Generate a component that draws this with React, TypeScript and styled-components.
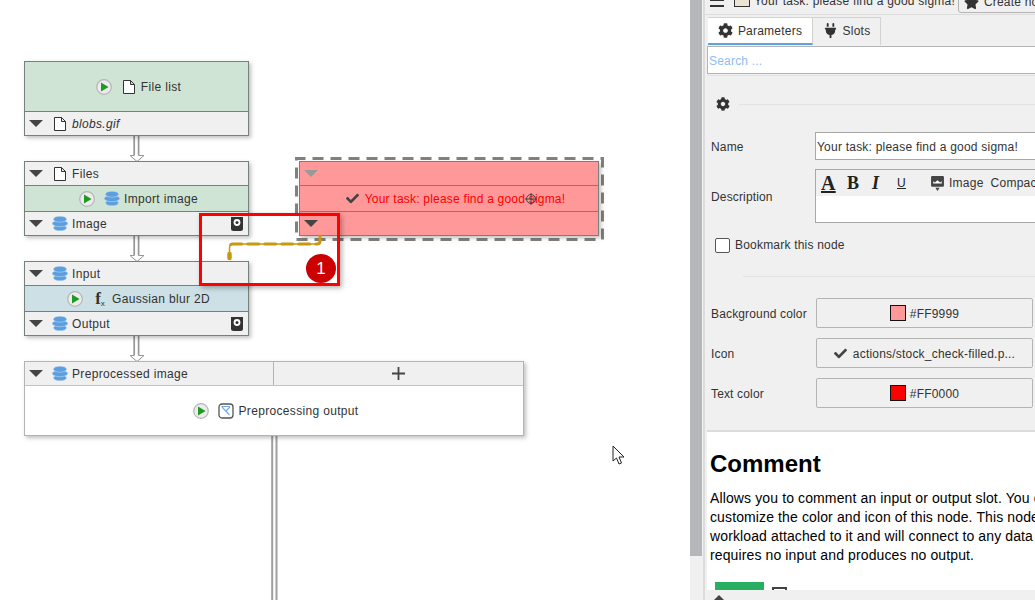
import React from 'react'
import styled, { createGlobalStyle } from 'styled-components'
import { FaCog, FaPlug, FaStar, FaCheck } from 'react-icons/fa'

const GlobalStyle = createGlobalStyle`
  html, body { margin: 0; padding: 0; background: #fff; }
  body { font-family: "Liberation Sans", Arial, sans-serif; font-size: 12px; color: #333; }
  * { box-sizing: border-box; }
`

const Page = styled.div`
  width: 1035px;
  height: 600px;
  display: flex;
  overflow: hidden;
`
const Canvas = styled.div`
  position: relative;
  width: 690px;
  height: 600px;
  flex: none;
  background: #fff;
`
const Divider = styled.div`
  width: 15px;
  flex: none;
  background: #f0f0f0;
  display: flex;
  border-right: 2px solid #dcdcdc;
`
const Thumb = styled.div`
  width: 12px;
  height: 556px;
  background: #b6b7bb;
`

/* graph nodes */
const Node = styled.div<{ $x: number; $y: number; $w: number; $light?: boolean; $bg?: string }>`
  position: absolute;
  left: ${p => p.$x}px;
  top: ${p => p.$y}px;
  width: ${p => p.$w}px;
  display: flex;
  flex-direction: column;
  border: 1px solid ${p => (p.$light ? '#b4b4b4' : '#77817c')};
  background: ${p => p.$bg || '#f0f0f0'};
  box-shadow: 2px 2px 4px rgba(0, 0, 0, 0.25);
`
const Slot = styled.div`
  height: 23px;
  display: flex;
  align-items: center;
  gap: 4px;
  padding: 0 5px 0 4px;
`
const SlotSplit = styled.div`
  display: flex;
  height: 23px;
  background: #f0f0f0;
`
const SlotName = styled(Slot)`
  width: 248px;
  flex: none;
`
const SlotAdd = styled.div`
  flex: 1;
  display: flex;
  align-items: center;
  justify-content: center;
  border-left: 1px solid #b4b4b4;
`
const Title = styled.div<{
  $h: number
  $bg?: string
  $lineTop?: boolean
  $lineBottom?: boolean
  $color?: string
  $shift?: number
}>`
  height: ${p => p.$h}px;
  display: flex;
  align-items: center;
  justify-content: center;
  gap: 4px;
  padding-left: ${p => p.$shift ?? 4}px;
  background: ${p => p.$bg || 'transparent'};
  border-top: ${p => (p.$lineTop ? `1px solid ${p.$color || '#77817c'}` : 'none')};
  border-bottom: ${p => (p.$lineBottom ? `1px solid ${p.$color || '#77817c'}` : 'none')};
`
const NodeText = styled.span<{ $italic?: boolean; $color?: string; $track?: number }>`
  font-style: ${p => (p.$italic ? 'italic' : 'normal')};
  color: ${p => p.$color || '#333'};
  white-space: nowrap;
  letter-spacing: ${p => p.$track ?? 0.33}px;
`
const Caret = styled.span<{ $faded?: boolean }>`
  width: 0;
  height: 0;
  margin-right: 5px;
  flex: none;
  border-left: 7px solid transparent;
  border-right: 7px solid transparent;
  border-top: 7px solid ${p => (p.$faded ? '#999' : '#444')};
`
const Push = styled.div`
  flex: 1;
`
const IconSlot = styled.span`
  width: 16px;
  height: 16px;
  flex: none;
  display: flex;
  align-items: center;
  justify-content: center;
`
const Drawing = styled.svg<{ $after?: number }>`
  flex: none;
  display: block;
  margin-right: ${p => p.$after ?? 0}px;
`
const Overlay = styled.svg`
  position: absolute;
  left: 0;
  top: 0;
  pointer-events: none;
`
const DashFrame = styled.div`
  position: absolute;
  left: 295px;
  top: 157px;
  width: 309px;
  height: 84px;
`
const Highlight = styled.div`
  position: absolute;
  left: 199px;
  top: 213px;
  width: 141px;
  height: 73px;
  border: 3px solid #f00;
  box-shadow: 2px 2px 5px rgba(0, 0, 0, 0.3);
`
const Badge = styled.div`
  position: absolute;
  left: 306px;
  top: 254px;
  width: 30px;
  height: 29px;
  border-radius: 50%;
  background: #c00;
  color: #fff;
  font-size: 17px;
  display: flex;
  align-items: center;
  justify-content: center;
`

const Play = () => (
  <Drawing $after={5} width="16" height="16" viewBox="0 0 16 16">
    <circle cx="8" cy="8" r="7.3" fill="#ececec" stroke="#b5b5b5" strokeWidth="1.2" />
    <path d="M5 3.5 L12.6 8 L5 12.5 Z" fill="#1e9a23" />
  </Drawing>
)
const FileIcon = () => (
  <IconSlot>
    <Drawing width="12" height="14" viewBox="0 0 12 14">
      <path d="M0.5 0.5 H7.5 L11.5 4.5 V13.5 H0.5 Z M7.5 0.5 V4.5 H11.5" fill="#fff" stroke="#333" strokeWidth="1" />
    </Drawing>
  </IconSlot>
)
const Layers = () => (
  <IconSlot>
    <Drawing width="16" height="15" viewBox="0 0 16 15">
      <g fill="#5b9fe0" stroke="#cfe0f3" strokeWidth="0.5">
        <ellipse cx="8" cy="11.8" rx="6.6" ry="3" />
        <ellipse cx="8" cy="7.5" rx="7.8" ry="3.2" />
        <ellipse cx="8" cy="3.2" rx="6.6" ry="3" />
      </g>
    </Drawing>
  </IconSlot>
)
const Capture = () => (
  <Drawing width="12" height="14" viewBox="0 0 12 14">
    <path d="M0 0 H12 V11.5 Q12 14 9.5 14 H2.5 Q0 14 0 11.5 Z" fill="#333" />
    <circle cx="6" cy="5.5" r="3.4" fill="#fff" />
    <circle cx="6" cy="5.5" r="1.5" fill="#333" />
  </Drawing>
)
const PreviewIcon = () => (
  <IconSlot>
    <Drawing width="16" height="16" viewBox="0 0 16 16">
      <rect x="1" y="1" width="14" height="14" rx="3" fill="#fff" stroke="#555" strokeWidth="1.3" />
      <path d="M3.5 3.5 H12 M4 4 L11.5 12 M8 8 L12 4" fill="none" stroke="#6fa8e8" strokeWidth="1.1" />
    </Drawing>
  </IconSlot>
)
const Fx = styled.span`
  width: 16px;
  flex: none;
  text-align: center;
  font-family: "Liberation Serif", serif;
  font-weight: bold;
  font-size: 17px;
  line-height: 16px;
  color: #333;
  sub {
    font-size: 8px;
    font-family: "Liberation Sans", sans-serif;
    font-weight: normal;
    vertical-align: -2px;
    line-height: 0;
  }
`

const Edge = ({ y }: { y: number }) => (
  <Overlay width="690" height="600">
    <path d={`M134.2 ${y} V${y + 20} M138.6 ${y} V${y + 20}`} fill="none" stroke="#979797" strokeWidth="1.7" />
    <path d={`M134.2 ${y + 19.5} H130 L137 ${y + 25.5} L144 ${y + 19.5} H138.6`} fill="#fff" stroke="#979797" strokeWidth="1" />
  </Overlay>
)

/* side panel */
const Panel = styled.div`
  flex: 1;
  min-width: 0;
  height: 600px;
  position: relative;
  background: #f0f0f0;
  display: flex;
  flex-direction: column;
  overflow: hidden;
`
const TopBar = styled.div`
  height: 15px;
  flex: none;
  display: flex;
  align-items: flex-end;
  padding: 0 0 7px 5px;
  border-bottom: 1px solid #dcdcdc;
  overflow: hidden;
  white-space: nowrap;
`
const Burger = styled.div`
  width: 14px;
  height: 8px;
  margin-right: 10px;
  flex: none;
  border-top: 2px solid #333;
  border-bottom: 2px solid #333;
`
const TopSwatch = styled.div`
  width: 16px;
  height: 14px;
  margin-right: 4px;
  flex: none;
  background: #ebe3d3;
  border: 1px solid #333;
`
const TopTitle = styled.span`
  letter-spacing: 0.22px;
  margin-bottom: -1px;
`
const CreateButton = styled.div`
  display: flex;
  align-items: center;
  gap: 5px;
  height: 22px;
  margin-left: 3px;
  margin-bottom: -6px;
  padding: 0 8px 0 5px;
  border: 1px solid #b4b4b4;
  border-radius: 3px;
  background: #f0f0f0;
  color: #333;
  letter-spacing: 0.2px;
  svg { color: #333; font-size: 15px; }
`
const Tabs = styled.div`
  height: 28px;
  margin: 2px 0 0 3px;
  display: flex;
  flex: none;
`
const Tab = styled.div<{ $active?: boolean }>`
  display: flex;
  align-items: center;
  justify-content: center;
  gap: 5px;
  width: ${p => (p.$active ? '105px' : '68px')};
  background: ${p => (p.$active ? '#fff' : '#f0f0f0')};
  border: 1px solid #d2d2d2;
  border-left: ${p => (p.$active ? 'none' : '0')};
  border-bottom: ${p => (p.$active ? '2px solid #5ea2e4' : 'none')};
  padding-bottom: ${p => (p.$active ? '0' : '2px')};
  letter-spacing: 0.22px;
  svg { font-size: 15px; color: #333; }
`
const SearchInput = styled.div`
  height: 28px;
  margin: 1px 0 0 2px;
  flex: none;
  padding: 1px 0 0 1px;
  display: flex;
  align-items: center;
  background: #fff;
  border: 1px solid #b4b4b4;
  border-right: none;
  color: #8ebcf5;
  letter-spacing: 0.2px;
`
const FormLine = styled.div`
  height: 1px;
  margin: 1px 0 0 2px;
  flex: none;
  background: #e2e2e2;
`
const GroupHead = styled.div`
  display: flex;
  align-items: center;
  gap: 9px;
  margin: 18px 0 0 11px;
  height: 20px;
  flex: none;
  svg { font-size: 14px; color: #333; flex: none; }
`
const Rule = styled.div`
  flex: 1;
  height: 1px;
  background: #e2e2e2;
`
const Row = styled.div<{ $top: number; $h: number }>`
  display: flex;
  align-items: center;
  margin-top: ${p => p.$top}px;
  height: ${p => p.$h}px;
  flex: none;
  padding-left: 6px;
`
const Label = styled.div`
  width: 104px;
  flex: none;
  padding-top: 2px;
  color: #333;
  letter-spacing: 0.15px;
`
const TextBox = styled.div`
  flex: 1;
  height: 28px;
  display: flex;
  align-items: center;
  padding: 2px 0 0 1px;
  background: #fff;
  border: 1px solid #a8a8a8;
  border-right: none;
  white-space: nowrap;
  letter-spacing: 0.22px;
`
const Editor = styled.div`
  flex: 1;
  height: 54px;
  background: #fff;
  border: 1px solid #a8a8a8;
  border-right: none;
  display: flex;
  flex-direction: column;
  overflow: hidden;
`
const EditorBar = styled.div`
  height: 26px;
  flex: none;
  padding-left: 5px;
  background: #f0f0f0;
  display: flex;
  align-items: center;
  white-space: nowrap;
  letter-spacing: 0.25px;
`
const Glyph = styled.span<{ $w: number; $italic?: boolean; $under?: boolean; $size?: number }>`
  width: ${p => p.$w}px;
  flex: none;
  font-family: "Liberation Serif", serif;
  font-weight: bold;
  font-size: ${p => p.$size || 17}px;
  font-style: ${p => (p.$italic ? 'italic' : 'normal')};
  text-decoration: ${p => (p.$under ? 'underline' : 'none')};
  color: #222;
`
const PlainGlyph = styled(Glyph)`
  font-family: "Liberation Sans", sans-serif;
  font-weight: normal;
  font-size: 12px;
`
const EditorText = styled.span`
  margin-left: 5px;
  margin-right: 7px;
`
const CheckRow = styled.div`
  display: flex;
  align-items: center;
  gap: 5px;
  height: 16px;
  margin: 14px 0 0 10px;
  flex: none;
`
const Box = styled.div`
  width: 15px;
  height: 15px;
  background: #fff;
  border: 1px solid #555;
  border-radius: 2px;
`
const Separator = styled.div`
  height: 1px;
  margin: 23px 0 0 38px;
  flex: none;
  background: #e2e2e2;
`
const ValueButton = styled.div`
  width: 217px;
  height: 30px;
  margin-left: 1px;
  flex: none;
  display: flex;
  align-items: center;
  justify-content: center;
  gap: 4px;
  border: 1px solid #b4b4b4;
  border-radius: 2px;
  background: #f0f0f0;
  letter-spacing: 0.2px;
  svg { font-size: 13px; color: #444; margin-right: 2px; }
`
const ValueText = styled.span`
  padding-top: 2px;
`
const Swatch = styled.div<{ $c: string }>`
  width: 16px;
  height: 16px;
  background: ${p => p.$c};
  border: 1px solid #111;
`
const Doc = styled.div`
  margin: 22px 0 0 2px;
  flex: 1;
  min-height: 0;
  padding: 18px 0 0 3px;
  background: #fff;
  border-top: 2px solid #dcdcdc;
  white-space: nowrap;
  overflow: hidden;
  color: #000;
`
const DocTitle = styled.h1`
  margin: 0;
  font-size: 24px;
  line-height: 28px;
  font-weight: bold;
  color: #000;
`
const DocText = styled.p`
  margin: 11px 0 0;
  font-size: 14px;
  line-height: 19px;
  letter-spacing: 0.12px;
`
const DocBlock = styled.div`
  display: flex;
  align-items: flex-start;
  gap: 8px;
  margin: 17px 0 0 5px;
`
const GreenBlock = styled.div`
  width: 49px;
  height: 30px;
  background: #27ae60;
`
const SmallBox = styled.div`
  width: 15px;
  height: 15px;
  margin-top: 5px;
  border: 2px solid #444;
`
const BottomBar = styled.div`
  position: absolute;
  left: 2px;
  right: 0;
  bottom: 0;
  height: 10px;
  background: #f0f0f0;
`
const UpCaret = styled.div`
  position: absolute;
  left: 6px;
  top: 5px;
  width: 0;
  height: 0;
  border-left: 6px solid transparent;
  border-right: 6px solid transparent;
  border-bottom: 6px solid #444;
`

const App = () => {
  return (
    <Page>
      <GlobalStyle />
      <Canvas>
        <Edge y={136} />
        <Edge y={236} />
        <Edge y={336} />
        <Overlay width="690" height="600">
          <path d="M272.2 436 V600 M276.5 436 V600" fill="none" stroke="#a0a0a0" strokeWidth="2" />
        </Overlay>

        <Node $x={24} $y={61} $w={225}>
          <Title $h={50} $bg="#cfe4d5" $lineBottom>
            <Play />
            <FileIcon />
            <NodeText>File list</NodeText>
          </Title>
          <Slot>
            <Caret />
            <FileIcon />
            <NodeText $italic>blobs.gif</NodeText>
          </Slot>
        </Node>

        <Node $x={24} $y={161} $w={225}>
          <Slot>
            <Caret />
            <FileIcon />
            <NodeText>Files</NodeText>
          </Slot>
          <Title $h={27} $bg="#cfe4d5" $lineTop $lineBottom>
            <Play />
            <Layers />
            <NodeText>Import image</NodeText>
          </Title>
          <Slot>
            <Caret />
            <Layers />
            <NodeText>Image</NodeText>
            <Push />
            <Capture />
          </Slot>
        </Node>

        <Node $x={24} $y={261} $w={225}>
          <Slot>
            <Caret />
            <Layers />
            <NodeText>Input</NodeText>
          </Slot>
          <Title $h={27} $bg="#cde0e5" $lineTop $lineBottom>
            <Play />
            <Fx>
              f<sub>x</sub>
            </Fx>
            <NodeText>Gaussian blur 2D</NodeText>
          </Title>
          <Slot>
            <Caret />
            <Layers />
            <NodeText>Output</NodeText>
            <Push />
            <Capture />
          </Slot>
        </Node>

        <Node $x={24} $y={361} $w={500} $light $bg="#fff">
          <SlotSplit>
            <SlotName>
              <Caret />
              <Layers />
              <NodeText>Preprocessed image</NodeText>
            </SlotName>
            <SlotAdd>
              <Drawing width="15" height="15" viewBox="0 0 15 15">
                <path d="M7.5 1 V14 M1 7.5 H14" stroke="#444" strokeWidth="1.8" />
              </Drawing>
            </SlotAdd>
          </SlotSplit>
          <Title $h={50} $lineTop $color="#c4c4c4">
            <Play />
            <PreviewIcon />
            <NodeText>Preprocessing output</NodeText>
          </Title>
        </Node>

        <DashFrame>
          <Drawing width="309" height="84" viewBox="0 0 309 84">
            <rect
              x="1.5"
              y="1.5"
              width="306"
              height="81"
              fill="none"
              stroke="#85807a"
              strokeWidth="3"
              strokeDasharray="11 7"
              strokeDashoffset="2"
            />
          </Drawing>
        </DashFrame>
        <Node $x={299} $y={161} $w={300} $bg="#ff9999">
          <Slot>
            <Caret $faded />
          </Slot>
          <Title $h={27} $lineTop $lineBottom $shift={12}>
            <IconSlot>
              <FaCheck size={13} color="#444" />
            </IconSlot>
            <NodeText $color="#f00" $track={0.21}>Your task: please find a good sigma!</NodeText>
          </Title>
          <Slot>
            <Caret />
          </Slot>
        </Node>

        <Overlay width="690" height="600">
          <g fill="none" stroke="#c9980c">
            <path d="M320 236 V241 Q320 244 317 244 H233 Q229.5 244 229.5 248 V258" strokeWidth="1.5" />
            <path
              d="M320 236 V241 Q320 244 317 244 H233 Q229.5 244 229.5 248 V250"
              strokeWidth="3"
              strokeLinecap="round"
              strokeDasharray="11 6"
            />
            <path d="M229.5 254 V258" strokeWidth="4.5" strokeLinecap="round" />
          </g>
          <circle cx="531" cy="199" r="4.5" fill="none" stroke="#444" strokeWidth="1" />
          <path d="M531 193 V205 M525 199 H537" stroke="#444" strokeWidth="1" />
          <path d="M613 446 V461 L616.5 458 L619 464 L621.5 463 L619 457 L624 457 Z" fill="#fff" stroke="#222" strokeWidth="1" />
        </Overlay>
        <Highlight />
        <Badge>1</Badge>
      </Canvas>

      <Divider>
        <Thumb />
      </Divider>

      <Panel>
        <TopBar>
          <Burger />
          <TopSwatch />
          <TopTitle>Your task: please find a good sigma!</TopTitle>
          <CreateButton>
            <FaStar />
            Create note
          </CreateButton>
        </TopBar>
        <Tabs>
          <Tab $active>
            <FaCog />
            Parameters
          </Tab>
          <Tab>
            <FaPlug />
            Slots
          </Tab>
        </Tabs>
        <SearchInput>Search ...</SearchInput>
        <FormLine />
        <GroupHead>
          <FaCog />
          <Rule />
        </GroupHead>
        <Row $top={18} $h={28}>
          <Label>Name</Label>
          <TextBox>Your task: please find a good sigma!</TextBox>
        </Row>
        <Row $top={9} $h={54}>
          <Label>Description</Label>
          <Editor>
            <EditorBar>
              <Glyph $w={26} $under $size={20}>A</Glyph>
              <Glyph $w={25} $size={18}>B</Glyph>
              <Glyph $w={25} $italic $size={18}>I</Glyph>
              <PlainGlyph $w={34} $under>U</PlainGlyph>
              <Drawing width="13" height="15" viewBox="0 0 12 14">
                <path d="M1 0 H11 Q12 0 12 1 V9 Q12 10 11 10 H1 Q0 10 0 9 V1 Q0 0 1 0 Z M4 11 H8 L6 14 Z" fill="#444" />
                <path d="M2 7 V5 L3.5 6 L6 4 L8.5 6 L10 5 V7 Z" fill="#fff" />
              </Drawing>
              <EditorText>Image</EditorText>
              <span>Compact</span>
            </EditorBar>
          </Editor>
        </Row>
        <CheckRow>
          <Box />
          <NodeText $track={0.2}>Bookmark this node</NodeText>
        </CheckRow>
        <Separator />
        <Row $top={21} $h={30}>
          <Label>Background color</Label>
          <ValueButton>
            <Swatch $c="#ff9999" />
            <ValueText>#FF9999</ValueText>
          </ValueButton>
        </Row>
        <Row $top={10} $h={30}>
          <Label>Icon</Label>
          <ValueButton>
            <FaCheck />
            <ValueText>actions/stock_check-filled.p...</ValueText>
          </ValueButton>
        </Row>
        <Row $top={10} $h={30}>
          <Label>Text color</Label>
          <ValueButton>
            <Swatch $c="#ff0000" />
            <ValueText>#FF0000</ValueText>
          </ValueButton>
        </Row>
        <Doc>
          <DocTitle>Comment</DocTitle>
          <DocText>
            Allows you to comment an input or output slot. You can
            <br />
            customize the color and icon of this node. This node has no
            <br />
            workload attached to it and will connect to any data slot. It
            <br />
            requires no input and produces no output.
          </DocText>
          <DocBlock>
            <GreenBlock />
            <SmallBox />
          </DocBlock>
        </Doc>
        <BottomBar>
          <UpCaret />
        </BottomBar>
      </Panel>
    </Page>
  )
}

export default App
